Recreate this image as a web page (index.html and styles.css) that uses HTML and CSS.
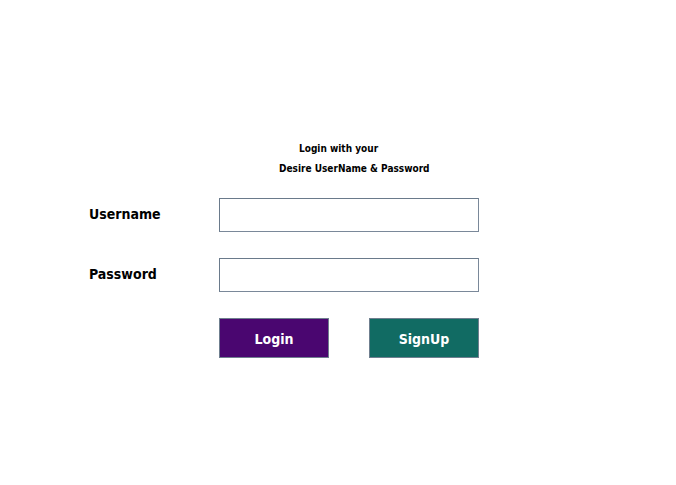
FILE: index.html
```html
<!DOCTYPE html>
<html>
<head>
<meta charset="utf-8">
<link rel="stylesheet" href="styles.css">
</head>
<body>
<div class="page">
  <div class="intro">
    <p class="intro-line1">Login with your</p>
    <p class="intro-line2">Desire UserName &amp; Password</p>
  </div>
  <form class="form">
    <label class="label" for="user">Username</label>
    <input class="field" id="user" type="text">
    <label class="label" for="pass">Password</label>
    <input class="field" id="pass" type="password">
    <div class="actions">
      <button type="button" class="btn btn-login">Login</button>
      <button type="button" class="btn btn-signup">SignUp</button>
    </div>
  </form>
</div>
</body>
</html>
```

FILE: styles.css
```css
html, body {
  margin: 0;
  padding: 0;
  background: #ffffff;
}
body {
  font-family: "DejaVu Sans Condensed", "DejaVu Sans", Verdana, sans-serif;
  color: #000;
}
.page {
  padding-top: 142px;
}
.intro p {
  margin: 0;
  font-weight: bold;
  font-size: 10px;
  line-height: 14px;
}
.intro-line1 {
  padding-left: 299px;
}
.intro-line2 {
  padding-left: 279px;
  margin-top: 6px !important;
}
.form {
  display: grid;
  grid-template-columns: 130px 260px;
  row-gap: 26px;
  padding-left: 89px;
  margin-top: 22px;
  align-items: center;
}
.label {
  font-weight: bold;
  font-size: 14px;
  padding-bottom: 3px;
}
.field {
  box-sizing: border-box;
  width: 260px;
  height: 34px;
  margin: 0;
  border: 1px solid #7a8899;
  border-top-color: #6a7a8b;
  border-left-color: #6a7a8b;
  background: #fff;
}
.actions {
  grid-column: 2;
  display: flex;
  gap: 40px;
}
.btn {
  box-sizing: border-box;
  width: 110px;
  height: 40px;
  border: 1px solid #6f7f8f;
  color: #fff;
  font-family: "DejaVu Sans Condensed", "DejaVu Sans", Verdana, sans-serif;
  font-weight: bold;
  font-size: 14px;
  padding: 2px 0 0 0;
}
.btn-login {
  background: #4a0670;
}
.btn-signup {
  background: #116b63;
}
```
